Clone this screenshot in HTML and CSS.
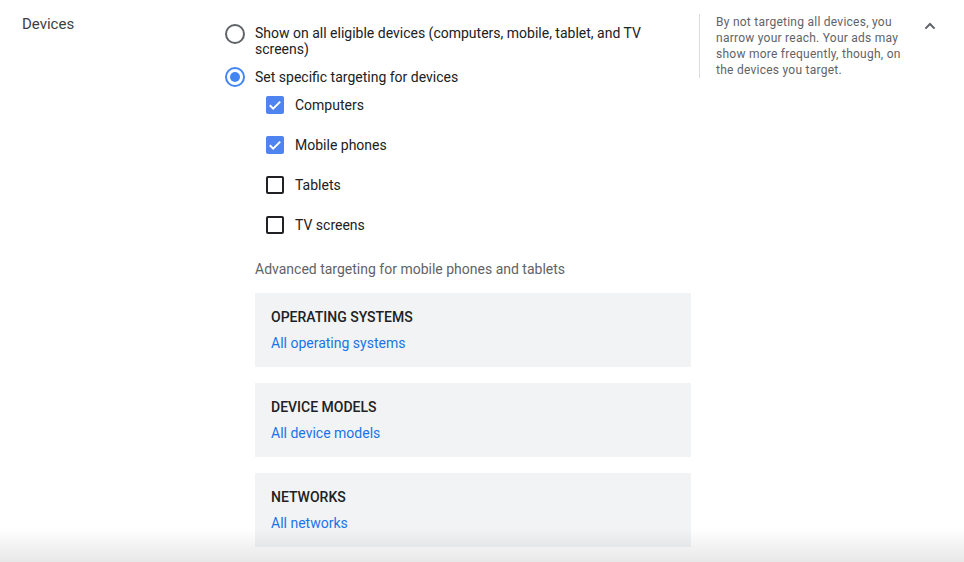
FILE: index.html
```html
<!DOCTYPE html>
<html>
<head>
<meta charset="utf-8">
<link rel="stylesheet" href="styles.css">
</head>
<body>
<div class="section">
  <div class="label">Devices</div>
  <div class="main">
    <div class="radio-row">
      <span class="radio"></span>
      <span class="radio-text wrap">Show on all eligible devices (computers, mobile, tablet, and TV screens)</span>
    </div>
    <div class="radio-row second">
      <span class="radio checked"><span class="dot"></span></span>
      <span class="radio-text">Set specific targeting for devices</span>
    </div>
    <div class="checklist">
      <div class="check-row">
        <span class="checkbox checked"><svg viewBox="0 0 18 18" width="18" height="18"><path d="M3.8 9.2 L7.2 12.6 L14.2 5.6" fill="none" stroke="#fff" stroke-width="2"/></svg></span>
        <span>Computers</span>
      </div>
      <div class="check-row">
        <span class="checkbox checked"><svg viewBox="0 0 18 18" width="18" height="18"><path d="M3.8 9.2 L7.2 12.6 L14.2 5.6" fill="none" stroke="#fff" stroke-width="2"/></svg></span>
        <span>Mobile phones</span>
      </div>
      <div class="check-row">
        <span class="checkbox"></span>
        <span>Tablets</span>
      </div>
      <div class="check-row">
        <span class="checkbox"></span>
        <span>TV screens</span>
      </div>
    </div>
    <div class="advanced">
      <div class="advanced-title">Advanced targeting for mobile phones and tablets</div>
      <div class="panel">
        <div class="panel-title">OPERATING SYSTEMS</div>
        <a class="panel-link">All operating systems</a>
      </div>
      <div class="panel">
        <div class="panel-title">DEVICE MODELS</div>
        <a class="panel-link">All device models</a>
      </div>
      <div class="panel">
        <div class="panel-title">NETWORKS</div>
        <a class="panel-link">All networks</a>
      </div>
    </div>
  </div>
  <div class="side">
    <div class="side-text">By not targeting all devices, you narrow your reach. Your ads may show more frequently, though, on the devices you target.</div>
  </div>
  <div class="toggle">
    <svg viewBox="0 0 24 24" width="24" height="24"><path d="M7.4 14.6 L12 10 L16.6 14.6" fill="none" stroke="#5f6368" stroke-width="2"/></svg>
  </div>
</div>
<div class="bottom-shade"></div>
</body>
</html>
```
FILE: styles.css
```css
html, body {
  margin: 0;
  padding: 0;
  background: #fff;
  font-family: Roboto, "Liberation Sans", Arial, sans-serif;
  font-size: 14px;
  color: #202124;
}

.section {
  display: flex;
  align-items: flex-start;
  padding: 14px 0 0 22px;
}

.label {
  width: 203px;
  flex: none;
  line-height: 20px;
  font-size: 15px;
  color: #3c4043;
}

.main {
  width: 466px;
  flex: none;
  padding-top: 10px;
}

.radio-row {
  display: flex;
  align-items: flex-start;
  gap: 10px;
}

.radio-row.second {
  margin-top: 10px;
  align-items: center;
}

.radio {
  width: 20px;
  height: 20px;
  box-sizing: border-box;
  border: 2px solid #5f6368;
  border-radius: 50%;
  flex: none;
  display: flex;
  align-items: center;
  justify-content: center;
}

.radio.checked {
  border-color: #4285f4;
}

.dot {
  width: 10px;
  height: 10px;
  border-radius: 50%;
  background: #4285f4;
}

.radio-text {
  width: 436px;
  line-height: 20px;
}

.radio-text.wrap {
  line-height: 16px;
  padding-top: 1px;
}

.checklist {
  margin-top: -2px;
  padding-left: 41px;
}

.check-row {
  height: 40px;
  display: flex;
  align-items: center;
  gap: 11px;
}

.checkbox {
  width: 18px;
  height: 18px;
  box-sizing: border-box;
  border: 2px solid #202124;
  border-radius: 2px;
  flex: none;
  display: flex;
}

.checkbox.checked {
  border: none;
  background: #4d84f0;
}

.advanced {
  padding-left: 30px;
  margin-top: 14px;
}

.advanced-title {
  line-height: 20px;
  color: #5f6368;
  margin-bottom: 14px;
}

.panel {
  background: #f1f3f4;
  padding: 14px 16px;
  margin-bottom: 16px;
  display: flex;
  flex-direction: column;
  gap: 6px;
}

.panel-title {
  line-height: 20px;
  font-weight: 500;
  color: #202124;
}

.panel-link {
  line-height: 20px;
  color: #1a73e8;
  cursor: pointer;
}

.side {
  margin-left: 8px;
  border-left: 1px solid #dadce0;
  padding-left: 16px;
  width: 200px;
  flex: none;
}

.side-text {
  font-size: 12px;
  line-height: 16px;
  letter-spacing: 0.25px;
  color: #5f6368;
}

.toggle {
  margin-left: 2px;
  margin-top: 0;
  width: 24px;
  height: 24px;
  display: flex;
}

.bottom-shade {
  position: fixed;
  left: 0;
  right: 0;
  bottom: 0;
  height: 34px;
  background: linear-gradient(to bottom, rgba(0,0,0,0), rgba(0,0,0,0.09));
  pointer-events: none;
}
```
